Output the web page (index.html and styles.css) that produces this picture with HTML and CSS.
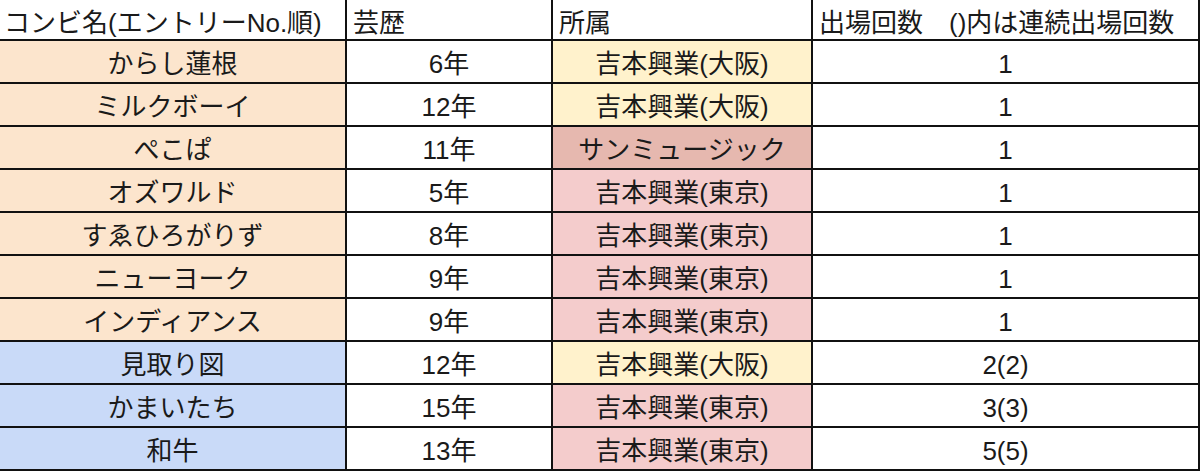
FILE: index.html
```html
<!DOCTYPE html>
<html lang="ja">
<head>
<meta charset="utf-8">
<title>M-1 決勝進出者</title>
<link rel="stylesheet" href="styles.css">
</head>
<body>
<div class="sheet">
  <div class="cell head">コンビ名(エントリーNo.順)</div>
  <div class="cell head">芸歴</div>
  <div class="cell head">所属</div>
  <div class="cell head">出場回数　()内は連続出場回数</div>

  <div class="cell peach">からし蓮根</div>
  <div class="cell">6年</div>
  <div class="cell yellow">吉本興業(大阪)</div>
  <div class="cell">1</div>

  <div class="cell peach">ミルクボーイ</div>
  <div class="cell">12年</div>
  <div class="cell yellow">吉本興業(大阪)</div>
  <div class="cell">1</div>

  <div class="cell peach">ぺこぱ</div>
  <div class="cell">11年</div>
  <div class="cell berry">サンミュージック</div>
  <div class="cell">1</div>

  <div class="cell peach">オズワルド</div>
  <div class="cell">5年</div>
  <div class="cell pink">吉本興業(東京)</div>
  <div class="cell">1</div>

  <div class="cell peach">すゑひろがりず</div>
  <div class="cell">8年</div>
  <div class="cell pink">吉本興業(東京)</div>
  <div class="cell">1</div>

  <div class="cell peach">ニューヨーク</div>
  <div class="cell">9年</div>
  <div class="cell pink">吉本興業(東京)</div>
  <div class="cell">1</div>

  <div class="cell peach">インディアンス</div>
  <div class="cell">9年</div>
  <div class="cell pink">吉本興業(東京)</div>
  <div class="cell">1</div>

  <div class="cell blue">見取り図</div>
  <div class="cell">12年</div>
  <div class="cell yellow">吉本興業(大阪)</div>
  <div class="cell">2(2)</div>

  <div class="cell blue">かまいたち</div>
  <div class="cell">15年</div>
  <div class="cell pink">吉本興業(東京)</div>
  <div class="cell">3(3)</div>

  <div class="cell blue">和牛</div>
  <div class="cell">13年</div>
  <div class="cell pink">吉本興業(東京)</div>
  <div class="cell">5(5)</div>
</div>
</body>
</html>
```

FILE: styles.css
```css
html, body {
  margin: 0;
  padding: 0;
  background: #ffffff;
}

.sheet {
  display: grid;
  grid-template-columns: 345px 204px 258px 385px;
  grid-template-rows: 39px repeat(10, 41px);
  gap: 2px;
  padding: 0 2px 2px 0;
  background: #111111;
  width: 1200px;
  box-sizing: border-box;
  font-family: "Liberation Sans", "Noto Sans CJK JP", sans-serif;
  font-size: 26px;
  color: #1a1a1a;
}

.cell {
  background: #ffffff;
  display: flex;
  align-items: center;
  justify-content: center;
  white-space: nowrap;
  overflow: hidden;
  line-height: 1;
  padding-top: 4px;
  box-sizing: border-box;
}

.head {
  justify-content: flex-start;
  padding-left: 6px;
  padding-top: 6px;
}

.head:first-child {
  padding-left: 4px;
}

.peach { background: #fce5cd; }
.blue { background: #c9daf8; }
.yellow { background: #fff2cc; }
.pink { background: #f4cccc; }
.berry { background: #e6b8af; }
```
